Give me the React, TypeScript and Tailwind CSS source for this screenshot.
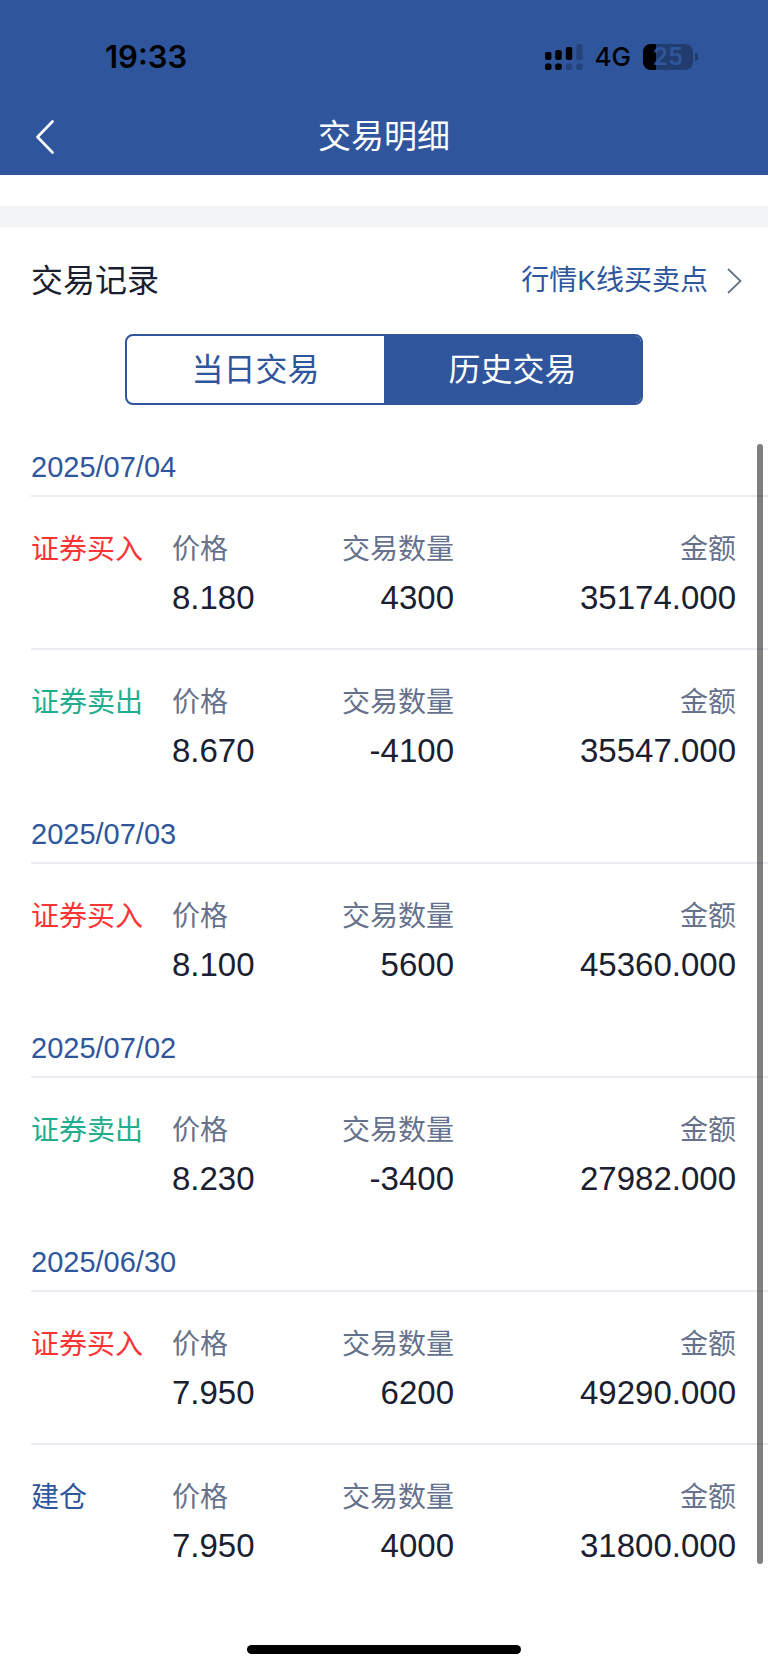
import React, { useState } from "react";
import clsx from "clsx";

type TradeKind = "buy" | "sell" | "open";

interface Trade {
  kind: TradeKind;
  price: string;
  quantity: string;
  amount: string;
}

interface TradeDay {
  date: string;
  trades: Trade[];
}

const history: TradeDay[] = [
  {
    date: "2025/07/04",
    trades: [
      { kind: "buy", price: "8.180", quantity: "4300", amount: "35174.000" },
      { kind: "sell", price: "8.670", quantity: "-4100", amount: "35547.000" },
    ],
  },
  {
    date: "2025/07/03",
    trades: [
      { kind: "buy", price: "8.100", quantity: "5600", amount: "45360.000" },
    ],
  },
  {
    date: "2025/07/02",
    trades: [
      { kind: "sell", price: "8.230", quantity: "-3400", amount: "27982.000" },
    ],
  },
  {
    date: "2025/06/30",
    trades: [
      { kind: "buy", price: "7.950", quantity: "6200", amount: "49290.000" },
      { kind: "open", price: "7.950", quantity: "4000", amount: "31800.000" },
    ],
  },
];

const kinds: Record<TradeKind, { label: string; color: string }> = {
  buy: { label: "证券买入", color: "text-[#fc3434]" },
  sell: { label: "证券卖出", color: "text-[#22ad8e]" },
  open: { label: "建仓", color: "text-[#2f569d]" },
};

const tabs = ["当日交易", "历史交易"];

const SignalIcon = () => (
  <svg width="38" height="26" viewBox="0 0 38 26" aria-hidden="true">
    <rect x="0" y="8" width="6.5" height="8" rx="2" />
    <rect x="10.2" y="6" width="6.5" height="10" rx="2" />
    <rect x="20.8" y="3" width="6.5" height="13" rx="2" />
    <rect x="31.2" y="0" width="6.5" height="16" rx="2" opacity="0.22" />
    <rect x="0" y="19.4" width="6.5" height="6.6" rx="2" />
    <rect x="10.2" y="19.4" width="6.5" height="6.6" rx="2" />
    <rect x="20.8" y="19.4" width="6.5" height="6.6" rx="2" opacity="0.22" />
    <rect x="31.2" y="19.4" width="6.5" height="6.6" rx="2" opacity="0.22" />
  </svg>
);

const Battery = () => (
  <div className="flex items-center gap-0.5">
    <div className="relative flex h-[26px] w-[50px] items-center justify-center rounded-lg bg-[#213c6e]">
      <div className="absolute inset-y-0 left-0 w-1/4 rounded-l-lg bg-black" />
      <span className="relative text-2xl leading-[26px] font-semibold text-[#2f569d]">
        25
      </span>
    </div>
    <div className="h-2 w-[3px] rounded-r-full bg-[#213c6e]" />
  </div>
);

const StatusBar = () => (
  <div className="flex h-[97px] items-center justify-between pt-4 pr-[70px] pl-[105px] font-['Inter',sans-serif] text-black">
    <span className="text-[31px] leading-10 font-semibold">19:33</span>
    <div className="flex items-center gap-3">
      <SignalIcon />
      <span className="text-[26px] leading-8 font-medium">4G</span>
      <Battery />
    </div>
  </div>
);

const NavBar = () => (
  <div className="grid h-[78px] grid-cols-[1fr_auto_1fr] items-center px-8 pt-0.5 text-white">
    <button type="button" aria-label="返回" className="justify-self-start p-1">
      <svg width="18" height="34" viewBox="0 0 18 34" fill="none" aria-hidden="true">
        <path
          d="M16.5 1.5L1.5 17L16.5 32.5"
          stroke="currentColor"
          strokeWidth="2.6"
          strokeLinecap="round"
          strokeLinejoin="round"
        />
      </svg>
    </button>
    <h1 className="text-[33px] leading-[48px]">交易明细</h1>
  </div>
);

interface FieldProps {
  label: string;
  value: string;
  className?: string;
}

const Field: React.FC<FieldProps> = ({ label, value, className }) => (
  <div className={className}>
    <dt className="text-[28px] leading-[48px] text-[#66718c]">{label}</dt>
    <dd className="text-[33px] leading-[48px] text-[#1a2030]">{value}</dd>
  </div>
);

const TradeRow: React.FC<{ trade: Trade }> = ({ trade }) => {
  const { label, color } = kinds[trade.kind];

  return (
    <li className="flex h-[153px] border-t-2 border-[#ebebf1] pt-[29px] pr-8">
      <h4 className={clsx("w-1/5 text-[28px] leading-[48px]", color)}>
        {label}
      </h4>
      <dl className="grid w-4/5 grid-cols-[1fr_1fr_2fr]">
        <Field label="价格" value={trade.price} />
        <Field label="交易数量" value={trade.quantity} className="text-right" />
        <Field label="金额" value={trade.amount} className="text-right" />
      </dl>
    </li>
  );
};

export default function App() {
  const [activeTab, setActiveTab] = useState(tabs[1]);

  return (
    <div className="min-h-screen bg-white font-['Liberation_Sans','Noto_Sans_CJK_SC',sans-serif]">
      <header className="bg-[#2f569d]">
        <StatusBar />
        <NavBar />
      </header>

      <main>
        <div className="mt-[31px] h-[21px] bg-[#f2f4f7]" />

        <div className="flex h-[107px] items-center justify-between pr-[26px] pl-[31px]">
          <h2 className="text-[32px] leading-[48px] text-[#1a2030]">交易记录</h2>
          <a
            href="#kline"
            className="flex items-center gap-[19px] text-[28px] leading-[48px] text-[#2f569d]"
          >
            行情K线买卖点
            <svg width="15" height="26" viewBox="0 0 15 26" fill="none" aria-hidden="true">
              <path d="M1 1L13.5 13L1 25" stroke="#66718c" strokeWidth="1.8" />
            </svg>
          </a>
        </div>

        <div className="mx-auto flex h-[71px] w-[518px] max-w-full rounded-lg border-2 border-[#2f569d] bg-white">
          {tabs.map((tab) => (
            <button
              key={tab}
              type="button"
              aria-pressed={tab === activeTab}
              onClick={() => setActiveTab(tab)}
              className={clsx(
                "flex-1 text-[32px] leading-[48px] first:rounded-l-md last:rounded-r-md",
                tab === activeTab
                  ? "bg-[#2f569d] text-white"
                  : "text-[#2f569d]",
              )}
            >
              {tab}
            </button>
          ))}
        </div>

        <div className="relative mt-[29px] pl-[31px]">
          {history.map(({ date, trades }) => (
            <section key={date}>
              <h3 className="h-[61px] pt-[9px] text-[29px] leading-[48px] text-[#2f569d]">
                {date}
              </h3>
              <ul>
                {trades.map((trade) => (
                  <TradeRow key={trade.kind} trade={trade} />
                ))}
              </ul>
            </section>
          ))}
          <div className="absolute top-[10px] right-[5px] bottom-8 w-1.5 rounded-full bg-black/50" />
        </div>
      </main>

      <footer className="pt-[49px] pb-[15px]">
        <div className="mx-auto h-[9px] w-[274px] rounded-full bg-black" />
      </footer>
    </div>
  );
}
